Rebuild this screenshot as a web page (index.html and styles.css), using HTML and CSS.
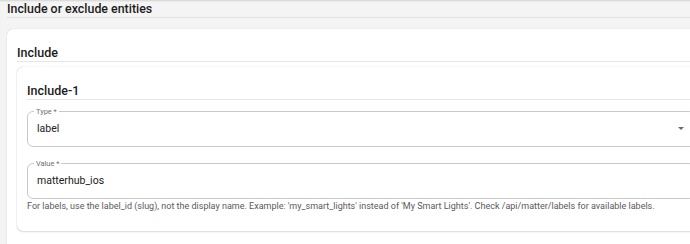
FILE: index.html
```html
<html lang="en">

<head>
    <title>Include or exclude entities</title>
    <link rel="stylesheet" href="styles.css">
</head>

<body>
    <div class="page">
        <h2 class="section-title">Include or exclude entities</h2>
        <div class="card">
            <h3 class="card-title">Include</h3>
            <div class="item-card">
                <h3 class="card-title">Include-1</h3>
                <div class="field field-select">
                    <span class="field-label">Type *</span>
                    <span class="field-value">label</span>
                    <span class="select-arrow"></span>
                </div>
                <div class="field field-value-input">
                    <span class="field-label">Value *</span>
                    <span class="field-value">matterhub_ios</span>
                </div>
                <p class="helper">For labels, use the label_id (slug), not the display name. Example: 'my_smart_lights' instead of 'My Smart Lights'. Check /api/matter/labels for available labels.</p>
            </div>
        </div>
    </div>
</body>
</html>
```

FILE: styles.css
```css
body {
    margin: 0;
    padding: 0;
    height: 100vh;
    background-color: #f4f4f4;
    overflow: hidden;
    font-family: Roboto, "Liberation Sans", Arial, sans-serif;
    color: #1c1c1c;
}

.page {
    width: 708px;
    padding: 2px 0 0 7px;
    box-shadow: inset 0 2px 2px -1px rgba(0, 0, 0, 0.14);
}

.section-title {
    margin: 0 0 11px 0;
    padding-bottom: 1px;
    font-size: 12.4px;
    line-height: 14px;
    font-weight: 500;
    border-bottom: 1px solid #e2e2e2;
}

.card {
    background: #fff;
    border-radius: 6px;
    box-shadow: 0 0 1px rgba(0, 0, 0, 0.25), 0 1px 2px rgba(0, 0, 0, 0.08);
    padding: 16px 10px 20px 10px;
}

.card-title {
    margin: 0;
    padding-bottom: 1px;
    font-size: 12.5px;
    line-height: 15px;
    font-weight: 500;
    border-bottom: 1px solid #e6e6e6;
}

.item-card {
    margin-top: 5px;
    background: #fff;
    border-radius: 6px;
    box-shadow: 0 0 1px rgba(0, 0, 0, 0.3), 0 1px 2px rgba(0, 0, 0, 0.12);
    padding: 16px 10px 19px 10px;
}

.item-card .card-title {
    margin-bottom: 11px;
}

.field {
    position: relative;
    display: flex;
    align-items: center;
    height: 36px;
    box-sizing: border-box;
    padding: 0 10px 2px 9px;
    border: 1px solid #c9c9c9;
    border-radius: 6px;
    font-size: 10.5px;
    color: #212121;
}

.field + .field {
    margin-top: 16px;
}

.field-label {
    position: absolute;
    top: -5px;
    left: 6px;
    padding: 0 2px;
    background: #fff;
    font-size: 7.4px;
    line-height: 9px;
    color: #707070;
}

.select-arrow {
    margin-left: auto;
    width: 0;
    height: 0;
    border-left: 3px solid transparent;
    border-right: 3px solid transparent;
    border-top: 3px solid #6b6b6b;
}

.helper {
    margin: 2px 0 0 0;
    font-size: 9px;
    line-height: 11px;
    color: #5a5a5a;
    white-space: nowrap;
}
```
